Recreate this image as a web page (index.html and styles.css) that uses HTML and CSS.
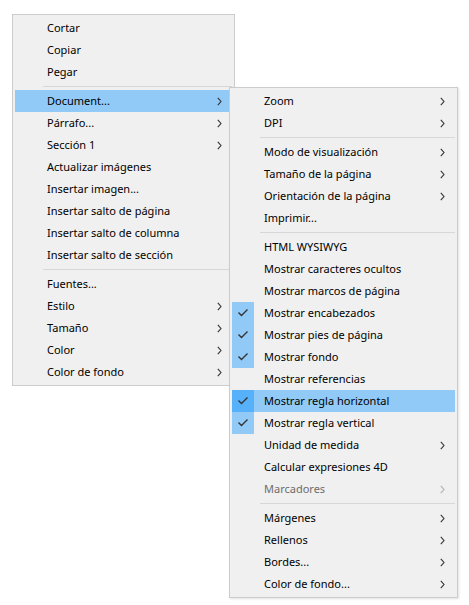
FILE: index.html
```html
<!DOCTYPE html>
<html lang="es">
<head>
<meta charset="utf-8">
<link rel="stylesheet" href="styles.css">
</head>
<body>
<div class="desk">
  <div class="menu main">
    <div class="item"><span class="chk"></span><span class="lbl">Cortar</span></div>
    <div class="item"><span class="chk"></span><span class="lbl">Copiar</span></div>
    <div class="item"><span class="chk"></span><span class="lbl">Pegar</span></div>
    <div class="sep"></div>
    <div class="item hot"><span class="chk"></span><span class="lbl">Document...</span><svg class="arr" viewBox="0 0 5 9"><polyline points="0.8,0.8 4,4.5 0.8,8.2"/></svg></div>
    <div class="item"><span class="chk"></span><span class="lbl">Párrafo...</span><svg class="arr" viewBox="0 0 5 9"><polyline points="0.8,0.8 4,4.5 0.8,8.2"/></svg></div>
    <div class="item"><span class="chk"></span><span class="lbl">Sección 1</span><svg class="arr" viewBox="0 0 5 9"><polyline points="0.8,0.8 4,4.5 0.8,8.2"/></svg></div>
    <div class="item"><span class="chk"></span><span class="lbl">Actualizar imágenes</span></div>
    <div class="item"><span class="chk"></span><span class="lbl">Insertar imagen...</span></div>
    <div class="item"><span class="chk"></span><span class="lbl">Insertar salto de página</span></div>
    <div class="item"><span class="chk"></span><span class="lbl">Insertar salto de columna</span></div>
    <div class="item"><span class="chk"></span><span class="lbl">Insertar salto de sección</span></div>
    <div class="sep"></div>
    <div class="item"><span class="chk"></span><span class="lbl">Fuentes...</span></div>
    <div class="item"><span class="chk"></span><span class="lbl">Estilo</span><svg class="arr" viewBox="0 0 5 9"><polyline points="0.8,0.8 4,4.5 0.8,8.2"/></svg></div>
    <div class="item"><span class="chk"></span><span class="lbl">Tamaño</span><svg class="arr" viewBox="0 0 5 9"><polyline points="0.8,0.8 4,4.5 0.8,8.2"/></svg></div>
    <div class="item"><span class="chk"></span><span class="lbl">Color</span><svg class="arr" viewBox="0 0 5 9"><polyline points="0.8,0.8 4,4.5 0.8,8.2"/></svg></div>
    <div class="item"><span class="chk"></span><span class="lbl">Color de fondo</span><svg class="arr" viewBox="0 0 5 9"><polyline points="0.8,0.8 4,4.5 0.8,8.2"/></svg></div>
  </div>

  <div class="menu sub">
    <div class="item"><span class="chk"></span><span class="lbl">Zoom</span><svg class="arr" viewBox="0 0 5 9"><polyline points="0.8,0.8 4,4.5 0.8,8.2"/></svg></div>
    <div class="item"><span class="chk"></span><span class="lbl">DPI</span><svg class="arr" viewBox="0 0 5 9"><polyline points="0.8,0.8 4,4.5 0.8,8.2"/></svg></div>
    <div class="sep"></div>
    <div class="item"><span class="chk"></span><span class="lbl">Modo de visualización</span><svg class="arr" viewBox="0 0 5 9"><polyline points="0.8,0.8 4,4.5 0.8,8.2"/></svg></div>
    <div class="item"><span class="chk"></span><span class="lbl">Tamaño de la página</span><svg class="arr" viewBox="0 0 5 9"><polyline points="0.8,0.8 4,4.5 0.8,8.2"/></svg></div>
    <div class="item"><span class="chk"></span><span class="lbl">Orientación de la página</span><svg class="arr" viewBox="0 0 5 9"><polyline points="0.8,0.8 4,4.5 0.8,8.2"/></svg></div>
    <div class="item"><span class="chk"></span><span class="lbl">Imprimir...</span></div>
    <div class="sep"></div>
    <div class="item"><span class="chk"></span><span class="lbl">HTML WYSIWYG</span></div>
    <div class="item"><span class="chk"></span><span class="lbl">Mostrar caracteres ocultos</span></div>
    <div class="item"><span class="chk"></span><span class="lbl">Mostrar marcos de página</span></div>
    <div class="item"><span class="chk on"><svg viewBox="0 0 22 22"><polyline points="6.5,10.5 9.5,13.5 15.5,7.5"/></svg></span><span class="lbl">Mostrar encabezados</span></div>
    <div class="item"><span class="chk on"><svg viewBox="0 0 22 22"><polyline points="6.5,10.5 9.5,13.5 15.5,7.5"/></svg></span><span class="lbl">Mostrar pies de página</span></div>
    <div class="item"><span class="chk on"><svg viewBox="0 0 22 22"><polyline points="6.5,10.5 9.5,13.5 15.5,7.5"/></svg></span><span class="lbl">Mostrar fondo</span></div>
    <div class="item"><span class="chk"></span><span class="lbl">Mostrar referencias</span></div>
    <div class="item hot"><span class="chk on"><svg viewBox="0 0 22 22"><polyline points="6.5,10.5 9.5,13.5 15.5,7.5"/></svg></span><span class="lbl">Mostrar regla horizontal</span></div>
    <div class="item"><span class="chk on"><svg viewBox="0 0 22 22"><polyline points="6.5,10.5 9.5,13.5 15.5,7.5"/></svg></span><span class="lbl">Mostrar regla vertical</span></div>
    <div class="item"><span class="chk"></span><span class="lbl">Unidad de medida</span><svg class="arr" viewBox="0 0 5 9"><polyline points="0.8,0.8 4,4.5 0.8,8.2"/></svg></div>
    <div class="item"><span class="chk"></span><span class="lbl">Calcular expresiones 4D</span></div>
    <div class="item dis"><span class="chk"></span><span class="lbl">Marcadores</span><svg class="arr" viewBox="0 0 5 9"><polyline points="0.8,0.8 4,4.5 0.8,8.2"/></svg></div>
    <div class="sep"></div>
    <div class="item"><span class="chk"></span><span class="lbl">Márgenes</span><svg class="arr" viewBox="0 0 5 9"><polyline points="0.8,0.8 4,4.5 0.8,8.2"/></svg></div>
    <div class="item"><span class="chk"></span><span class="lbl">Rellenos</span><svg class="arr" viewBox="0 0 5 9"><polyline points="0.8,0.8 4,4.5 0.8,8.2"/></svg></div>
    <div class="item"><span class="chk"></span><span class="lbl">Bordes...</span><svg class="arr" viewBox="0 0 5 9"><polyline points="0.8,0.8 4,4.5 0.8,8.2"/></svg></div>
    <div class="item"><span class="chk"></span><span class="lbl">Color de fondo...</span><svg class="arr" viewBox="0 0 5 9"><polyline points="0.8,0.8 4,4.5 0.8,8.2"/></svg></div>
  </div>
</div>
</body>
</html>
```

FILE: styles.css
```css
html, body {
  margin: 0;
  padding: 0;
  background: #ffffff;
}

.desk {
  display: flex;
  align-items: flex-start;
  min-height: 605px;
  box-sizing: border-box;
  padding: 14px 0 0 12px;
  font-family: "Noto Sans", "Open Sans", sans-serif;
  font-size: 11px;
  color: #000;
}

.menu {
  flex: 0 0 auto;
  background: #f0f0f0;
  border: 1px solid #cccccc;
  padding: 2px;
  box-sizing: border-box;
}

.main {
  width: 223px;
}

.sub {
  width: 229px;
  margin-left: -6px;
  margin-top: 73px;
  z-index: 1;
  box-shadow: 1px 1px 2px rgba(0, 0, 0, 0.12);
}

.item {
  display: flex;
  align-items: center;
  height: 22px;
  line-height: 22px;
  white-space: nowrap;
}

.item.hot {
  background: #91c9f7;
}

.chk {
  flex: 0 0 22px;
  width: 22px;
  height: 22px;
}

.chk.on {
  background: #91c9f7;
}

.hot .chk.on {
  background: #56b0fa;
}

.chk svg {
  display: block;
  width: 22px;
  height: 22px;
}

.chk polyline {
  fill: none;
  stroke: #333333;
  stroke-width: 1.4;
}

.lbl {
  flex: 1;
  margin-left: 10px;
}

.arr {
  flex: 0 0 5px;
  width: 5px;
  height: 9px;
  margin-right: 10px;
}

.arr polyline {
  fill: none;
  stroke: #333333;
  stroke-width: 1.1;
}

.dis .lbl {
  color: #6d6d6d;
}

.dis .arr polyline {
  stroke: #b0b0b0;
}

.sep {
  height: 1px;
  margin: 3px 0 3px 28px;
  background: #d7d7d7;
}
```
